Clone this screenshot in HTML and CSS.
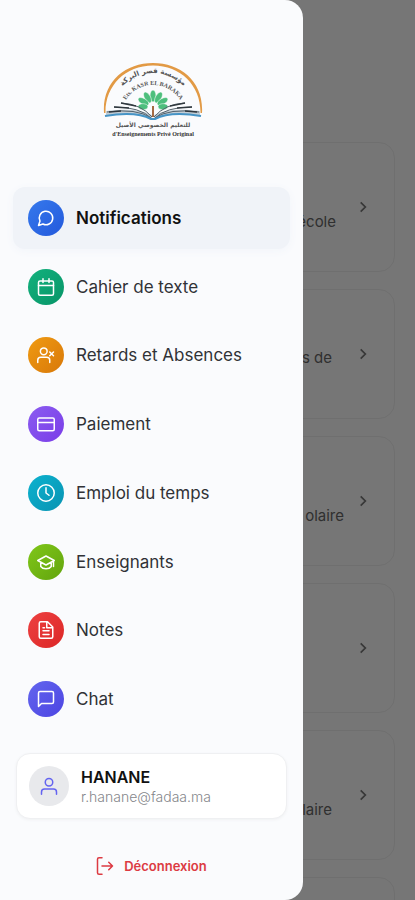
FILE: index.html
```html
<!DOCTYPE html>
<html lang="fr">
<head>
<meta charset="utf-8">
<meta name="viewport" content="width=device-width, initial-scale=1">
<title>Menu</title>
<link rel="stylesheet" href="styles.css">
</head>
<body>
<div class="app">
  <main class="feed">
    <article class="card"><p class="card-text">école</p><svg class="chevron" viewBox="0 0 24 24"><path d="m8 4 8 8-8 8"/></svg></article>
    <article class="card card-short"><p class="card-text">s de</p><svg class="chevron" viewBox="0 0 24 24"><path d="m8 4 8 8-8 8"/></svg></article>
    <article class="card card-wide"><p class="card-text">olaire</p><svg class="chevron" viewBox="0 0 24 24"><path d="m8 4 8 8-8 8"/></svg></article>
    <article class="card"><svg class="chevron" viewBox="0 0 24 24"><path d="m8 4 8 8-8 8"/></svg></article>
    <article class="card card-short-line"><p class="card-text">laire</p><svg class="chevron" viewBox="0 0 24 24"><path d="m8 4 8 8-8 8"/></svg></article>
    <article class="card"></article>
  </main>
  <div class="scrim"></div>
  <aside class="drawer">
    <header class="brand">
      <svg class="logo" viewBox="0 0 100 76" role="img" aria-label="Kasr El Baraka">
        <defs>
          <path id="arc-outer" d="M8 53A42 42 0 0 1 92 53"/>
          <path id="arc-inner" d="M18 55A32 32 0 0 1 82 55"/>
        </defs>
        <path d="M1 51C-1 20 22 1 50 1s51 19 49 50h-1.500C98 24 78 3.500 50 3.500S2 24 2.500 51z" fill="#e29a45"/>
        <text class="logo-arabic" text-anchor="middle"><textPath href="#arc-outer" startOffset="50%">مؤسسة قصر البركة</textPath></text>
        <text class="logo-name" text-anchor="middle"><textPath href="#arc-inner" startOffset="50%">Ets. KASR EL BARAKA</textPath></text>
        <g fill="#4dbf7d" stroke="#fff" stroke-width=".5">
          <ellipse cx="50" cy="34" rx="3" ry="6"/>
          <ellipse cx="50" cy="34" rx="3" ry="6" transform="rotate(-30 50 45)"/>
          <ellipse cx="50" cy="34" rx="3" ry="6" transform="rotate(30 50 45)"/>
          <ellipse cx="50" cy="34" rx="3" ry="6" transform="rotate(-60 50 45)"/>
          <ellipse cx="50" cy="34" rx="3" ry="6" transform="rotate(60 50 45)"/>
          <ellipse cx="50" cy="35" rx="3" ry="5" transform="rotate(-88 50 45)"/>
          <ellipse cx="50" cy="35" rx="3" ry="5" transform="rotate(88 50 45)"/>
        </g>
        <path d="M3 49q30-4 46 4v4q-16-8-46-3zM97 49q-30-4-46 4v4q16-8 46-3z" fill="#c3ced6"/>
        <path d="M18 41q20 1 31 14M82 41Q62 42 51 55M11 45q26 0 37 11M89 45Q63 45 52 56M4 50q30-4 44 6M96 50q-30-4-44 6" fill="none" stroke="#53616b" stroke-width="1"/>
        <path d="M18 41l15 3M82 41l-15 3M11 45l15 1M89 45l-15 1M6 50l12-1M94 50l-12-1" stroke="#30383e" stroke-width="1.500"/>
        <path d="M2 54q31-5 46 3h4q15-8 46-3" fill="none" stroke="#4694c6" stroke-width="2"/>
        <path d="M50 44v11" stroke="#a46a43" stroke-width="2"/>
        <text class="logo-caption" x="50" y="65" text-anchor="middle">للتعليم الخصوصي الأصيل</text>
        <text class="logo-footer" x="50" y="74" text-anchor="middle">d'Enseignements Privé Original</text>
      </svg>
    </header>
    <nav class="menu">
      <a class="item active" href="#"><span class="badge blue"><svg class="icon" viewBox="0 0 24 24"><path d="M7.900 20A9 9 0 1 0 4 16.100L2 22z"/></svg></span>Notifications</a>
      <a class="item" href="#"><span class="badge green"><svg class="icon" viewBox="0 0 24 24"><rect x="2" y="4" width="20" height="19" rx="2"/><path d="M2 10h20M8 1v5M16 1v5"/></svg></span>Cahier de texte</a>
      <a class="item" href="#"><span class="badge orange"><svg class="icon" viewBox="0 0 24 24"><circle cx="9" cy="7" r="4.500"/><path d="M1 22v-3a4 4 0 0 1 4-4h8a4 4 0 0 1 4 4v3M17 8l5 5M22 8l-5 5"/></svg></span>Retards et Absences</a>
      <a class="item" href="#"><span class="badge purple"><svg class="icon" viewBox="0 0 24 24"><rect x="1" y="4" width="22" height="17" rx="2"/><path d="M1 10h22"/></svg></span>Paiement</a>
      <a class="item" href="#"><span class="badge cyan"><svg class="icon" viewBox="0 0 24 24"><circle cx="12" cy="12" r="11"/><path d="M12 5v7l4 3"/></svg></span>Emploi du temps</a>
      <a class="item" href="#"><span class="badge lime"><svg class="icon" viewBox="0 0 24 24"><path d="M1 10 12 4l11 6-11 6zM5 12v6c3 4 11 4 14 0v-6M22 10v8"/></svg></span>Enseignants</a>
      <a class="item" href="#"><span class="badge red"><svg class="icon" viewBox="0 0 24 24"><path d="M14 1H5a2 2 0 0 0-2 2v18a2 2 0 0 0 2 2h14a2 2 0 0 0 2-2V8zM13 2v7h7M8 9h2M8 13h8M8 18h8"/></svg></span>Notes</a>
      <a class="item" href="#"><span class="badge indigo"><svg class="icon" viewBox="0 0 24 24"><path d="M22 16a2 2 0 0 1-2 2H6l-4 4V4a2 2 0 0 1 2-2h16a2 2 0 0 1 2 2z"/></svg></span>Chat</a>
    </nav>
    <section class="profile">
      <span class="avatar"><svg class="icon" viewBox="0 0 24 24"><circle cx="12" cy="7" r="5"/><path d="M2 23v-3a4 4 0 0 1 4-4h12a4 4 0 0 1 4 4v3"/></svg></span>
      <div class="identity"><strong class="name">HANANE</strong><span class="email">r.hanane@fadaa.ma</span></div>
    </section>
    <button class="logout" type="button"><svg class="icon" viewBox="0 0 24 24"><path d="M8 1H4a2 2 0 0 0-2 2v18a2 2 0 0 0 2 2h4M8 12h14M17 7l5 5-5 5"/></svg>Déconnexion</button>
  </aside>
</div>
</body>
</html>
```

FILE: styles.css
```css
* { box-sizing: border-box; }
body { margin: 0; font-family: Inter, "Liberation Sans", sans-serif; color: #303236; }
.app { position: relative; height: 100vh; overflow: hidden; background: #fbfbfb; }

.feed { display: flex; flex-direction: column; gap: 17px; padding: 142px 20px 0; }
.card { display: flex; flex: none; align-items: center; justify-content: flex-end; gap: 20px; height: 130px; padding-right: 24px; border: 1px solid #ececec; border-radius: 16px; }
.card-text { margin: 0; padding-top: 30px; font-size: 15px; line-height: 20px; color: #666; }
.card-short { gap: 24px; }
.card-short .card-text { padding-top: 8px; }
.card-short-line { gap: 24px; }
.card-wide { gap: 12px; }
.chevron { width: 14px; height: 14px; fill: none; stroke: #777; stroke-width: 3; }

.scrim { position: absolute; inset: 0; background: rgb(0 0 0 / 53%); }
.drawer { position: absolute; inset: 0 auto 0 0; width: 73%; display: flex; flex-direction: column; background: #fafbfd; border-radius: 0 18px 18px 0; }

.brand { flex: none; height: 187px; padding: 62px 0 0 3px; text-align: center; }
.logo { width: 100px; height: 76px; }
.logo-arabic, .logo-caption { font-family: "DejaVu Sans", sans-serif; font-size: 7px; font-weight: bold; fill: #555; }
.logo-caption { font-size: 6px; }
.logo-name { font-family: "Liberation Serif", serif; font-size: 6px; font-weight: bold; fill: #555; }
.logo-footer { font-family: "Liberation Serif", serif; font-size: 6px; font-weight: bold; fill: #333; }

.menu { flex: 1; display: flex; flex-direction: column; justify-content: space-between; padding: 0 13px; }
.item { display: flex; align-items: center; gap: 12px; height: 62px; padding-left: 15px; border-radius: 12px; color: inherit; font-size: 17px; text-decoration: none; }
.active { background: #f0f3f8; box-shadow: 0 2px 8px #f2f5fa; color: #111; font-weight: 600; }
.badge, .avatar { display: flex; flex: none; align-items: center; justify-content: center; border-radius: 50%; }
.badge { width: 36px; height: 36px; color: #fff; }
.icon { width: 18px; height: 18px; fill: none; stroke: currentColor; stroke-width: 2; stroke-linecap: round; stroke-linejoin: round; }
.blue { background: linear-gradient(135deg, #3679ec, #2359dc); }
.green { background: linear-gradient(135deg, #13b17d, #079568); }
.orange { background: linear-gradient(135deg, #f09b12, #d87809); }
.purple { background: linear-gradient(135deg, #8b5cf0, #7a3de8); }
.cyan { background: linear-gradient(135deg, #0cb2cf, #0893b2); }
.lime { background: linear-gradient(135deg, #80c719, #62a40e); }
.red { background: linear-gradient(135deg, #ed4141, #dc2626); }
.indigo { background: linear-gradient(135deg, #6265ee, #4d45e2); }

.profile { display: flex; align-items: center; gap: 12px; height: 66px; margin: 23px 16px 0; padding: 0 12px; background: #fff; border: 1px solid #eff0f2; border-radius: 14px; box-shadow: 0 1px 3px #f0f1f3; }
.avatar { width: 40px; height: 40px; background: #e8e9ec; color: #6464f0; }
.identity { display: flex; flex-direction: column; }
.name { font-size: 16px; font-weight: 600; line-height: 22px; color: #111; }
.email { font-size: 14px; line-height: 18px; color: #85878b; font-weight: 300; }
.logout { display: flex; align-items: center; justify-content: center; gap: 10px; height: 40px; margin: 27px 16px 14px; padding: 0; background: none; border: 0; color: #dc3a42; font: 600 13px Inter, sans-serif; }
```
